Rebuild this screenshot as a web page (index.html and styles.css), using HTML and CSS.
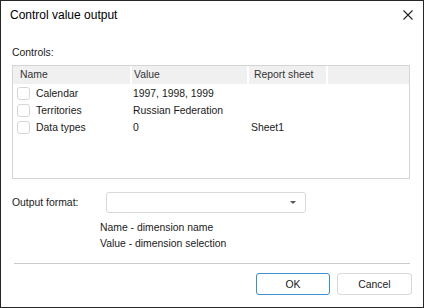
FILE: index.html
```html
<!DOCTYPE html>
<html lang="en">
<head>
  <meta charset="UTF-8">
  <title>Control value output</title>
  <link rel="stylesheet" href="styles.css">
</head>
<body>
  <div class="dialog">
    <div class="titlebar">
      <span class="title">Control value output</span>
      <span class="close">
        <svg width="10" height="10" viewBox="0 0 10 10"><path d="M0.5 0.5 L9.5 9.5 M9.5 0.5 L0.5 9.5" stroke="#222" stroke-width="1.1" fill="none"/></svg>
      </span>
    </div>
    <div class="content">
      <div class="caption">Controls:</div>
      <div class="grid">
        <div class="grid-head">
          <div class="col col-name">Name</div>
          <div class="col col-value">Value</div>
          <div class="col col-sheet">Report sheet</div>
          <div class="col col-rest"></div>
        </div>
        <div class="grid-rows">
          <div class="row">
            <div class="cell cell-name"><span class="check"></span>Calendar</div>
            <div class="cell cell-value">1997, 1998, 1999</div>
            <div class="cell cell-sheet"></div>
          </div>
          <div class="row">
            <div class="cell cell-name"><span class="check"></span>Territories</div>
            <div class="cell cell-value">Russian Federation</div>
            <div class="cell cell-sheet"></div>
          </div>
          <div class="row">
            <div class="cell cell-name"><span class="check"></span>Data types</div>
            <div class="cell cell-value">0</div>
            <div class="cell cell-sheet">Sheet1</div>
          </div>
        </div>
      </div>
      <div class="field">
        <label class="field-label">Output format:</label>
        <div class="combo"><span class="arrow"></span></div>
      </div>
      <div class="hint">
        <div>Name - dimension name</div>
        <div>Value - dimension selection</div>
      </div>
    </div>
    <div class="footer">
      <div class="separator"></div>
      <div class="buttons">
        <button class="btn btn-default">OK</button>
        <button class="btn">Cancel</button>
      </div>
    </div>
  </div>
</body>
</html>
```

FILE: styles.css
```css
* {
  box-sizing: border-box;
  margin: 0;
  padding: 0;
}
body {
  font-family: 'Liberation Sans', Arial, sans-serif;
  font-size: 10.4px;
  color: #1a1a1a;
  background: #fff;
}
.dialog {
  width: 424px;
  height: 308px;
  border: 1px solid #262626;
  background: #fff;
  display: flex;
  flex-direction: column;
}
.titlebar {
  height: 28px;
  display: flex;
  align-items: center;
  justify-content: space-between;
  padding-left: 9px;
  padding-right: 10px;
}
.title {
  font-size: 12px;
  color: #000;
}
.close {
  display: flex;
  width: 10px;
  height: 10px;
}
.content {
  padding: 16px 13px 0 11px;
}
.caption {
  line-height: 16px;
  margin-bottom: 4px;
}
.grid {
  height: 114px;
  border: 1px solid #d4d4d4;
}
.grid-head {
  display: flex;
  height: 18px;
  background: #f0f0f0;
  color: #333;
}
.col {
  line-height: 18px;
  border-right: 2px solid #fff;
}
.col-name {
  width: 119px;
  padding-left: 7px;
}
.col-value {
  width: 117px;
  padding-left: 2px;
}
.col-sheet {
  width: 79px;
  padding-left: 5px;
}
.col-rest {
  flex: 1;
  border-right: none;
}
.grid-rows {
  padding-top: 1px;
}
.row {
  display: flex;
  height: 17px;
  align-items: center;
}
.cell-name {
  width: 119px;
  padding-left: 4px;
  display: flex;
  align-items: center;
}
.cell-value {
  width: 118px;
  padding-left: 1px;
}
.cell-sheet {
  padding-left: 1px;
}
.check {
  width: 13px;
  height: 13px;
  border: 1px solid #d6d6d6;
  border-radius: 3px;
  margin-right: 6px;
  background: #fff;
}
.field {
  display: flex;
  align-items: center;
  margin-top: 13px;
}
.field-label {
  width: 94px;
}
.combo {
  width: 200px;
  height: 21px;
  border: 1px solid #d9d9d9;
  border-radius: 3px;
  display: flex;
  align-items: center;
  justify-content: flex-end;
  padding-right: 9px;
}
.arrow {
  width: 0;
  height: 0;
  border-left: 3px solid transparent;
  border-right: 3px solid transparent;
  border-top: 3px solid #555;
}
.hint {
  margin: 7px 0 0 88px;
  line-height: 16px;
}
.footer {
  margin-top: 11px;
  padding: 0 11px 0 13px;
}
.separator {
  height: 1px;
  background: #cbcbcb;
  margin-right: 2px;
}
.buttons {
  display: flex;
  justify-content: flex-end;
  gap: 7px;
  margin-top: 9px;
}
.btn {
  font-family: inherit;
  font-size: 10.4px;
  color: #1a1a1a;
  width: 75px;
  height: 22px;
  background: #fff;
  border: 1px solid #d8d8d8;
  border-radius: 3px;
}
.btn-default {
  width: 74px;
  border-color: #3b8fd1;
}
```
